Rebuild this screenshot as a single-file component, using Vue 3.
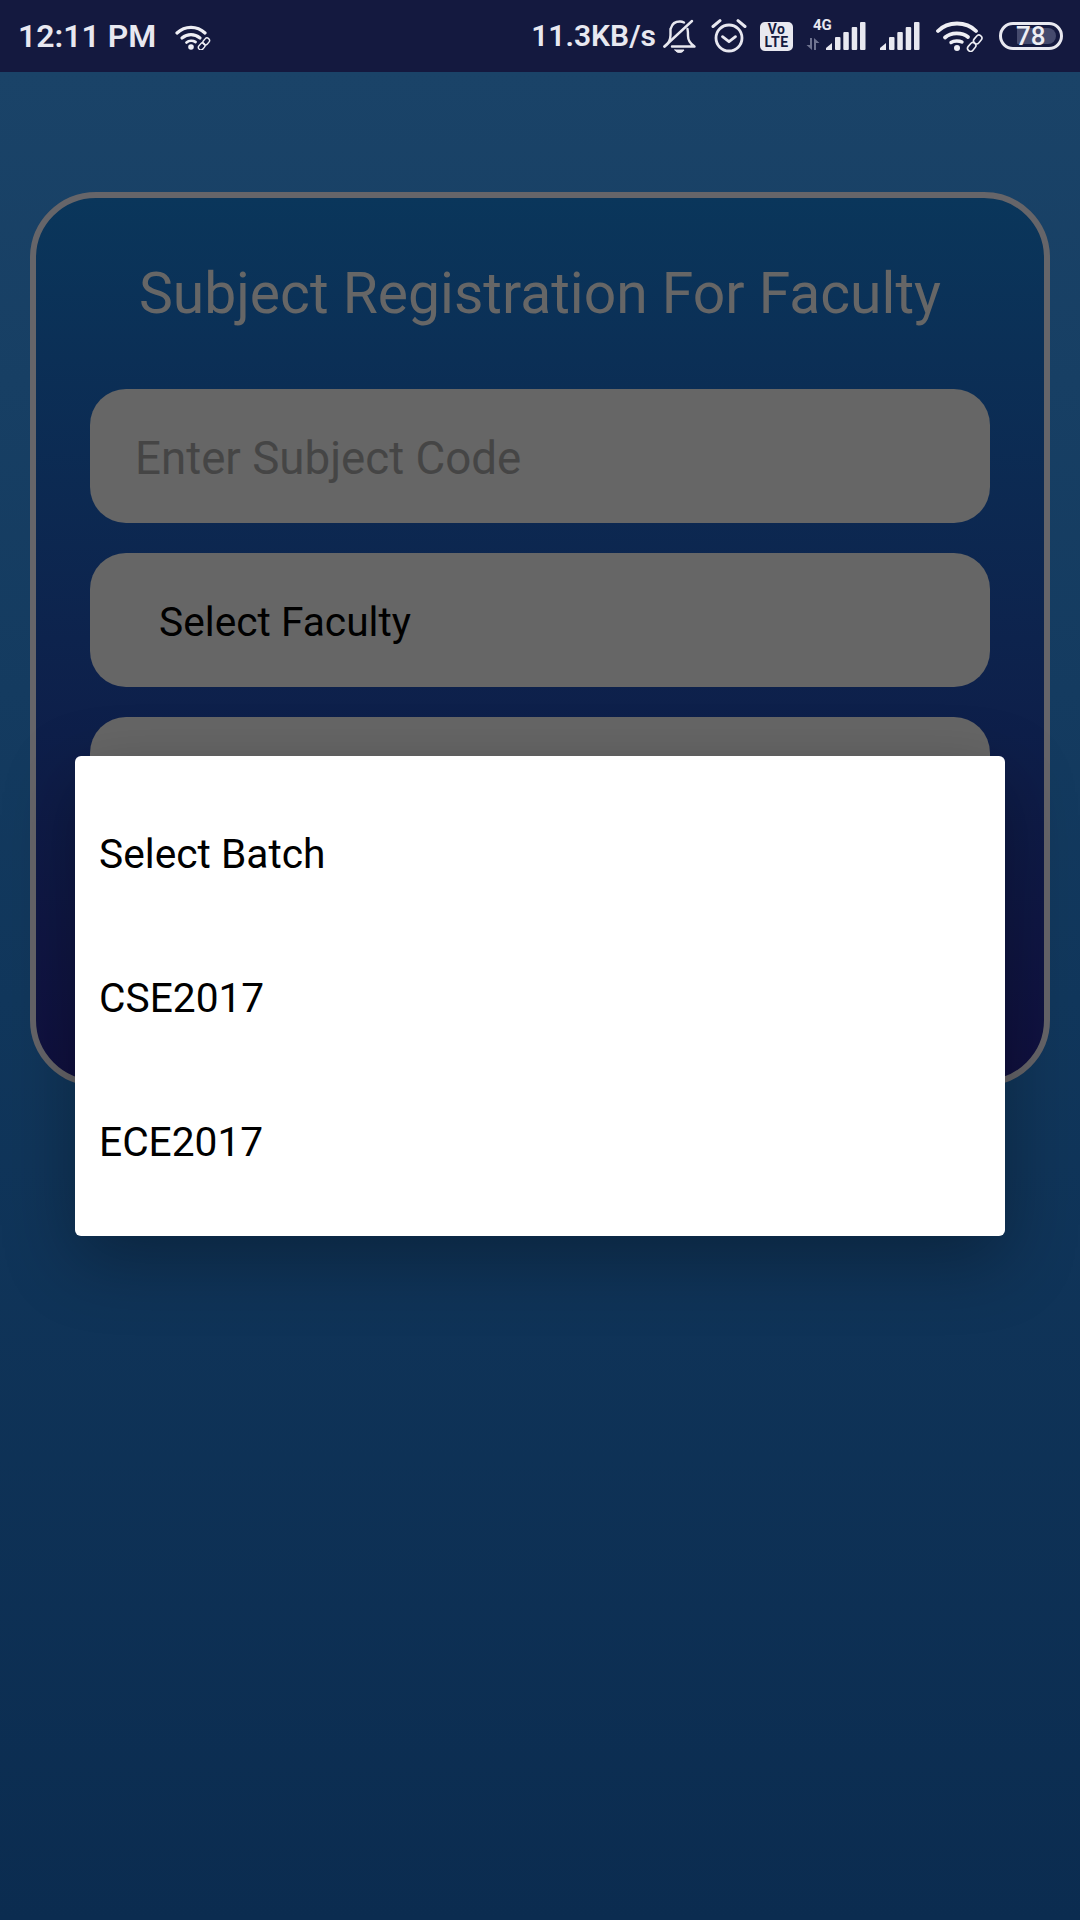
<script setup>
const fields = [
  { text: 'Enter Subject Code', kind: 'hint' },
  { text: 'Select Faculty', kind: 'spin' },
  { text: '', kind: 'spin' }
]
const options = ['Select Batch', 'CSE2017', 'ECE2017']
</script>

<template>
  <div class="page">
    <header class="status">
      <div class="left">
        <span class="time">12:11 PM</span>
        <svg class="wifi-s" viewBox="0 0 36 26" width="36" height="26" fill="none" stroke="#eeeef4" stroke-linecap="round">
          <path d="M2 9C10 1.500 22 1.500 30 9" stroke-width="3.200" />
          <path d="M7 14C12.500 9.500 19.500 9.500 25 14" stroke-width="3.200" />
          <path d="M11.500 18.500C14 16.500 18 16.500 20.500 18" stroke-width="2.800" />
          <circle cx="16" cy="23" r="2.800" fill="#eeeef4" stroke="none" />
          <g stroke-width="1.400">
            <rect x="23" y="20" width="7.500" height="5" rx="2.500" transform="rotate(-50 26.700 22.500)" />
            <rect x="27.500" y="15" width="7.500" height="5" rx="2.500" transform="rotate(-50 31.200 17.500)" />
          </g>
        </svg>
      </div>
      <div class="right">
        <span class="speed">11.3KB/s</span>
        <svg class="bell" viewBox="0 0 34 34" width="34" height="34" fill="none" stroke="#e8e8f0" stroke-width="2.400" stroke-linecap="round" stroke-linejoin="round">
          <path d="M8 9C9 5 12.500 2.500 17 2.500C18.500 2.500 20 3 21 3.500" />
          <path d="M1.500 27.500C6 24.500 7.500 21 7.500 16V10" />
          <path d="M24.500 10C25 12 25 14 25 17C25 21 27 24.500 31.500 27.500H9" />
          <path d="M1.500 27.500L29 2" />
          <path d="M12 31H21C20 33 18 33.500 16.500 33.500C15 33.500 13 33 12 31Z" fill="#e8e8f0" stroke-width="1" />
        </svg>
        <svg class="alarm" viewBox="0 0 36 36" width="36" height="36" fill="none" stroke="#e8e8f0" stroke-linecap="round" stroke-linejoin="round">
          <circle cx="18" cy="20" r="13" stroke-width="2.800" />
          <path d="M11.500 18.700L18 23.700L24.500 18.700" stroke-width="2.800" />
          <path d="M2 8.500L9 2.700M34 8.500L27 2.700" stroke-width="3" />
        </svg>
        <div class="volte"><span>Vo</span><span>LTE</span></div>
        <div class="net">
          <span class="four-g">4G</span>
          <svg class="arrows" viewBox="0 0 14 12" width="14" height="12" fill="#6f7390">
            <path d="M4 0H6V12L0.500 7H4ZM8 0L13.500 5H10V12H8Z" />
          </svg>
          <svg viewBox="0 0 40 28" width="40" height="28" fill="#e8e8f0">
            <path d="M0 28V26L6 21V28Z" />
            <rect x="9" y="15" width="5.500" height="13" rx="1" />
            <rect x="17.300" y="10" width="5.500" height="18" rx="1" />
            <rect x="25.700" y="5" width="5.500" height="23" rx="1" />
            <rect x="34" y="0" width="5.500" height="28" rx="1" />
          </svg>
        </div>
        <svg class="sig" viewBox="0 0 40 28" width="40" height="28" fill="#e8e8f0">
          <path d="M0 28V26L6 21V28Z" />
          <rect x="9" y="15" width="5.500" height="13" rx="1" />
          <rect x="17.300" y="10" width="5.500" height="18" rx="1" />
          <rect x="25.700" y="5" width="5.500" height="23" rx="1" />
          <rect x="34" y="0" width="5.500" height="28" rx="1" />
        </svg>
        <svg class="wifi-l" viewBox="0 0 48 32" width="48" height="32" fill="none" stroke="#eeeef4" stroke-linecap="round">
          <path d="M2 11C12 1 30 1 40 11" stroke-width="3.800" />
          <path d="M9 17.500C15 12 26 12 32 17" stroke-width="3.800" />
          <path d="M15 22.500C18 20.500 23 20.500 26 22" stroke-width="3.400" />
          <circle cx="21" cy="28" r="3" fill="#eeeef4" stroke="none" />
          <g stroke-width="1.600">
            <rect x="31" y="24" width="9.500" height="6" rx="3" transform="rotate(-50 35.700 27)" />
            <rect x="37" y="16.500" width="9.500" height="6" rx="3" transform="rotate(-50 41.700 19.500)" />
          </g>
        </svg>
        <div class="battery"><div class="charge"></div><span class="level">78</span></div>
      </div>
    </header>

    <main class="main">
      <section class="card">
        <h1 class="title">Subject Registration For Faculty</h1>
        <div class="fields">
          <div v-for="(f, i) in fields" :key="i" class="field" :class="f.kind">{{ f.text }}</div>
        </div>
      </section>
    </main>

    <div class="dialog">
      <div v-for="o in options" :key="o" class="option">{{ o }}</div>
    </div>
  </div>
</template>

<style>
html, body { margin: 0; padding: 0; background: #0b2c50; }
</style>

<style scoped>
.page {
  position: relative;
  width: 1080px;
  height: 1920px;
  overflow: hidden;
  font-family: Roboto, "Liberation Sans", sans-serif;
  background: linear-gradient(180deg, #1a4368 72px, #11375c 1000px, #0b2c50 1920px);
}
.status {
  height: 72px;
  box-sizing: border-box;
  padding: 0 17px 0 18px;
  display: flex;
  align-items: center;
  justify-content: space-between;
  background: #14193f;
  color: #e8e8f0;
}
.left, .right { display: flex; align-items: center; }
.time { font-size: 32px; font-weight: 600; line-height: 72px; }
.wifi-s { margin: 1px 0 0 19px; }
.speed { font-size: 30px; font-weight: 600; line-height: 72px; }
.bell { margin-left: 7px; }
.alarm { margin-left: 14px; }
.volte {
  margin-left: 13px;
  width: 33px;
  height: 29px;
  border-radius: 5px;
  background: #e8e8f0;
  color: #14193f;
  font-size: 14px;
  font-weight: 700;
  letter-spacing: 0.500px;
  line-height: 13px;
  display: flex;
  flex-direction: column;
  align-items: center;
  justify-content: center;
}
.net {
  position: relative;
  margin-left: 13px;
  width: 60px;
  height: 28px;
  display: flex;
  justify-content: flex-end;
}
.four-g {
  position: absolute;
  left: 7px;
  top: -4px;
  font-size: 15px;
  font-weight: 700;
  line-height: 15px;
}
.arrows { position: absolute; left: 0; bottom: 0; }
.sig { margin-left: 14px; }
.wifi-l { margin-left: 16px; }
.battery {
  position: relative;
  margin-left: 15px;
  width: 64px;
  height: 28px;
  box-sizing: border-box;
  border: 3px solid #e8e8f0;
  border-radius: 14px;
}
.charge {
  position: absolute;
  left: 15px;
  top: 3px;
  bottom: 3px;
  right: 4px;
  background: #454a6d;
  border-radius: 1px 9px 9px 1px;
}
.level {
  position: absolute;
  left: 14px;
  top: -3px;
  font-size: 26px;
  font-weight: 500;
  line-height: 28px;
  color: #eeeef4;
}
.main { padding: 120px 30px 0; }
.card {
  box-sizing: border-box;
  height: 894px;
  border: 6px solid #666569;
  border-radius: 66px;
  padding: 0 54px;
  background: linear-gradient(180deg, #0a365b 0%, #10103f 100%);
}
.title {
  margin: 0;
  padding-top: 60px;
  font-size: 57px;
  font-weight: 400;
  line-height: 72px;
  text-align: center;
  color: #666666;
  white-space: nowrap;
}
.fields {
  margin-top: 59px;
  display: flex;
  flex-direction: column;
  gap: 30px;
}
.field {
  box-sizing: border-box;
  height: 134px;
  padding-top: 4px;
  border-radius: 36px;
  background: #666666;
  display: flex;
  align-items: center;
  white-space: nowrap;
  line-height: 1;
}
.hint { padding-top: 6px; padding-left: 45px; font-size: 45.700px; color: #454545; }
.spin { padding-left: 69px; font-size: 40.700px; color: #000; }
.dialog {
  position: absolute;
  left: 75px;
  top: 756px;
  width: 930px;
  box-sizing: border-box;
  padding: 24px 0;
  background: #fff;
  border-radius: 6px;
  box-shadow: 0 24px 72px rgba(0, 0, 0, 0.3);
}
.option {
  box-sizing: border-box;
  height: 144px;
  padding: 4px 0 0 24px;
  display: flex;
  align-items: center;
  font-size: 40.700px;
  color: #000;
}
</style>
